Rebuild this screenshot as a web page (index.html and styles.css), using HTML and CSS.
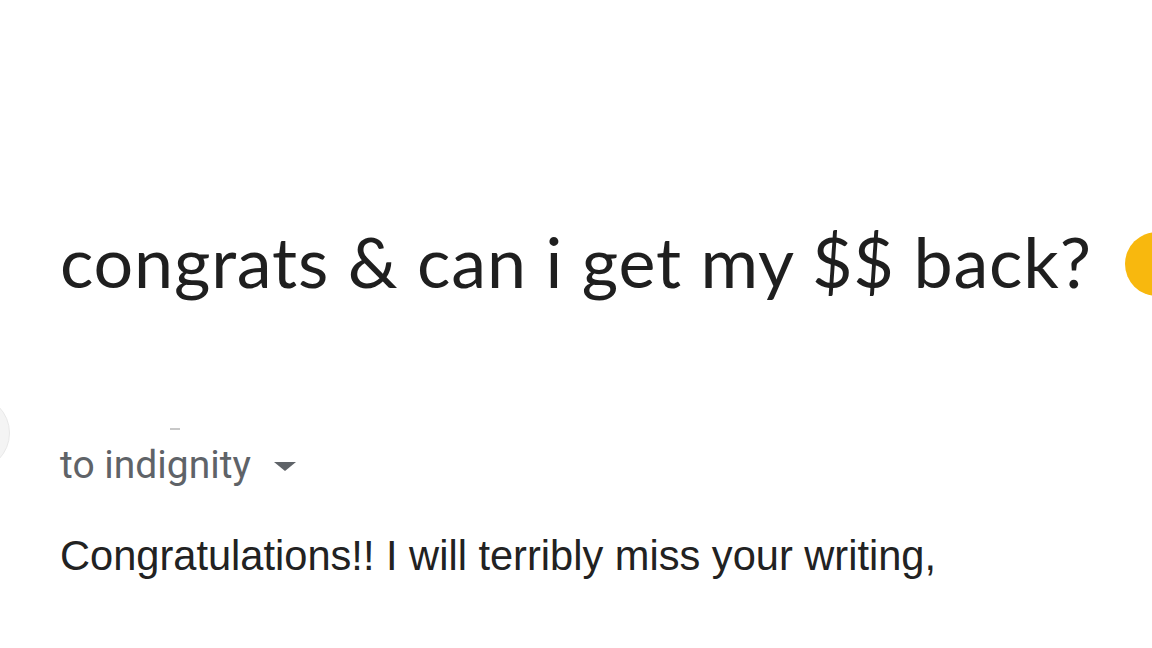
FILE: index.html
```html
<!DOCTYPE html>
<html>
<head>
<meta charset="utf-8">
<link rel="stylesheet" href="styles.css">
</head>
<body>
<div class="page">
  <div class="subject-row">
    <h1 class="subject">congrats &amp; can i get my $$ back?</h1>
    <span class="label-dot"></span>
  </div>
  <div class="message">
    <span class="avatar"></span>
    <span class="name-stub"></span>
    <div class="recipients">to indignity <span class="caret"></span></div>
    <p class="body-text">Congratulations!! I will terribly miss your writing,</p>
  </div>
</div>
</body>
</html>
```
FILE: styles.css
```css
html, body {
  margin: 0;
  padding: 0;
  background: #ffffff;
}
.page {
  width: 1152px;
  height: 648px;
  overflow: hidden;
  position: relative;
}
.subject-row {
  display: flex;
  align-items: center;
  padding: 219px 0 0 60px;
  height: 84px;
}
.subject {
  margin: 0;
  font-family: Lato, "Open Sans", sans-serif;
  font-weight: 400;
  font-size: 70px;
  letter-spacing: 0.8px;
  line-height: 84px;
  color: #1f1f1f;
  white-space: nowrap;
}
.label-dot {
  position: absolute;
  left: 1125px;
  top: 232px;
  width: 64px;
  height: 64px;
  border-radius: 50%;
  background: #f8b80e;
}
.message {
  position: relative;
  padding: 138px 0 0 60px;
}
.avatar {
  position: absolute;
  left: -66px;
  top: 92px;
  width: 74px;
  height: 74px;
  border-radius: 50%;
  background: #f4f4f4;
  border: 1px solid #e8e8e8;
}
.name-stub {
  position: absolute;
  left: 170px;
  top: 125px;
  width: 10px;
  height: 2px;
  background: #c8c8c8;
}
.recipients {
  display: flex;
  align-items: center;
  gap: 23px;
  font-family: Roboto, "Liberation Sans", sans-serif;
  font-size: 39px;
  line-height: 48px;
  color: #5f6368;
}
.caret {
  width: 0;
  height: 0;
  border-left: 11px solid transparent;
  border-right: 11px solid transparent;
  border-top: 9px solid #5f6368;
  margin-top: 2px;
}
.body-text {
  margin: 43px 0 0 0;
  font-family: "Liberation Sans", Arial, sans-serif;
  font-size: 41.6px;
  line-height: 48px;
  color: #222222;
  white-space: nowrap;
}
```
